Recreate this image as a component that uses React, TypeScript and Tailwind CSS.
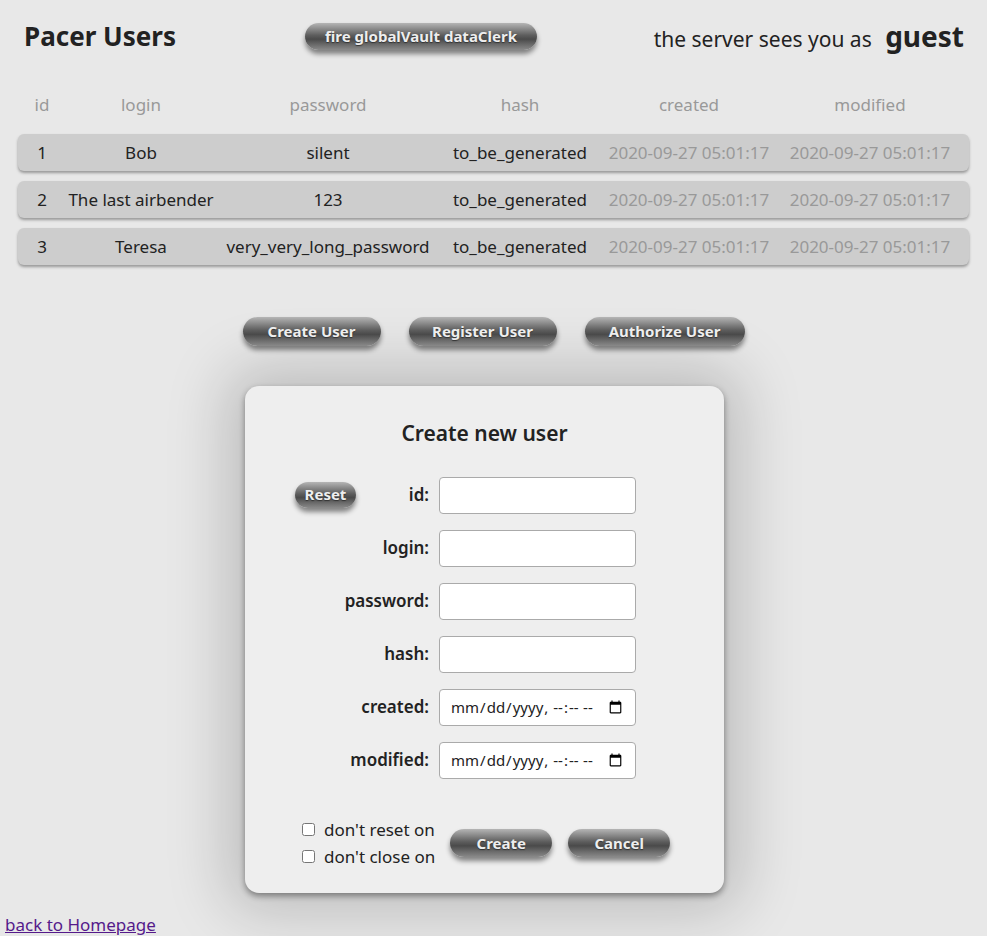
const font = "font-['Lato','DejaVu_Sans',sans-serif]";
const btn =
  "rounded-full bg-[linear-gradient(#b5b5b5,#5e5e5e_45%,#4a4a4a_60%,#8a8a8a)] text-[#eee] font-bold text-[15px] shadow-[0_4px_5px_rgba(0,0,0,0.45)] [text-shadow:0_1px_1px_#333]";

const users = [
  ["1", "Bob", "silent"],
  ["2", "The last airbender", "123"],
  ["3", "Teresa", "very_very_long_password"],
];
const cols = "grid grid-cols-[48px_150px_224px_160px_178px_184px] items-center text-center";

function Field({ label, type = "text" }: { label: string; type?: string }) {
  return (
    <div className="flex items-center justify-end gap-[10px]">
      <span className="font-semibold text-[17px] text-[#222]">{label}:</span>
      <input
        type={type}
        className="w-[197px] h-[37px] bg-white border border-[#aaa] rounded-[4px] px-[10px] text-[15px] text-[#222]"
      />
    </div>
  );
}

export default function App() {
  return (
    <div className={`${font} w-[987px] h-[936px] bg-[#e8e8e8] relative overflow-hidden text-[#222]`}>
      <div className="flex items-center pl-[24px] pt-[20px] h-[52px]">
        <h1 className="text-[26px] font-bold w-[281px]">Pacer Users</h1>
        <button className={`${btn} w-[232px] h-[27px] text-[14px]`}>fire globalVault dataClerk</button>
        <div className="flex-1 pr-[23px] text-right text-[21px] whitespace-nowrap">
          the server sees you as <span className="font-bold text-[28px] ml-[8px]">guest</span>
        </div>
      </div>

      <div className="px-[18px] mt-[38px]">
        <div className={`${cols} h-[30px] text-[17px] text-[#999]`}>
          <span>id</span><span>login</span><span>password</span><span>hash</span><span>created</span><span>modified</span>
        </div>
        <div className="flex flex-col gap-[10px] mt-[14px]">
          {users.map(([id, login, pw]) => (
            <div key={id} className={`${cols} h-[37px] bg-[#cdcdcd] rounded-[6px] shadow-[0_2px_3px_rgba(0,0,0,0.35)] text-[17px]`}>
              <span>{id}</span>
              <span>{login}</span>
              <span>{pw}</span>
              <span>to_be_generated</span>
              <span className="text-[#999]">2020-09-27 05:01:17</span>
              <span className="text-[#999]">2020-09-27 05:01:17</span>
            </div>
          ))}
        </div>
      </div>

      <div className="flex justify-center gap-[28px] mt-[52px]">
        <button className={`${btn} w-[138px] h-[29px]`}>Create User</button>
        <button className={`${btn} w-[148px] h-[29px]`}>Register User</button>
        <button className={`${btn} w-[160px] h-[29px]`}>Authorize User</button>
      </div>

      <div className="ml-[245px] mt-[40px] w-[479px] h-[507px] bg-[#eeeeee] rounded-[14px] shadow-[0_0_60px_20px_rgba(0,0,0,0.18),0_3px_6px_rgba(0,0,0,0.4)] flex flex-col">
        <h2 className="text-center text-[21px] font-semibold mt-[32px]">Create new user</h2>
        <div className="relative mt-[27px] pr-[88px] flex flex-col gap-[16px]">
          <button className={`${btn} absolute left-[50px] top-[5px] w-[61px] h-[26px] text-[14px]`}>Reset</button>
          <Field label="id" />
          <Field label="login" />
          <Field label="password" />
          <Field label="hash" />
          <Field label="created" type="datetime-local" />
          <Field label="modified" type="datetime-local" />
        </div>
        <div className="flex items-center mt-[38px] pl-[57px]">
          <div className="flex flex-col gap-[2px] text-[17px]">
            <label className="flex items-center gap-[9px]"><input type="checkbox" className="w-[13px] h-[13px]" />don't reset on</label>
            <label className="flex items-center gap-[9px]"><input type="checkbox" className="w-[13px] h-[13px]" />don't close on</label>
          </div>
          <button className={`${btn} ml-[15px] w-[102px] h-[28px]`}>Create</button>
          <button className={`${btn} ml-[16px] w-[102px] h-[28px]`}>Cancel</button>
        </div>
      </div>

      <a href="#" className="absolute left-[5px] top-[914px] leading-[22px] text-[17px] text-[#551a8b] underline">back to Homepage</a>
    </div>
  );
}
